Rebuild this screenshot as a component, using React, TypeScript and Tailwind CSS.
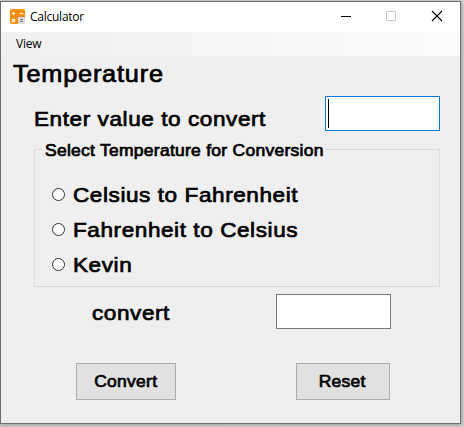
import React from "react";

const bold = "block w-fit whitespace-nowrap text-black [-webkit-text-stroke:0.7px_black]";
const large = `${bold} origin-left scale-x-110 text-[20.5px] leading-[24px] tracking-[0.52px]`;
const medium = `${bold} text-[16.5px] leading-[16px] tracking-[0.25px]`;

function CalculatorIcon() {
  return (
    <svg width="15" height="15" viewBox="0 0 15 15" className="mt-[7px] ml-[9px] shrink-0">
      <rect width="15" height="15" rx="2" fill="#f9920a" />
      <path d="M8 8h7v5a2 2 0 0 1-2 2H8z" fill="#dedede" />
      <path d="M7.5 0v15M0 7.5h15" stroke="#d87908" strokeWidth="0.6" />
      <path d="M2 4.5h3M3.5 3v3M10 4.5h3" stroke="#fff" strokeWidth="1.1" />
      <path d="M2 10l3 3M5 10l-3 3" stroke="#fff" strokeWidth="1.1" />
      <path d="M10 10.5h3M10 12.5h3" stroke="#777" strokeWidth="1" />
    </svg>
  );
}

function TitleBar() {
  return (
    <header className="flex h-[30px] bg-white">
      <CalculatorIcon />
      <span className="ml-[5px] pt-[5px] font-['Open_Sans','Noto_Sans',sans-serif] text-[12px] leading-[19px] tracking-[-0.25px] text-black">
        Calculator
      </span>
      <svg width="103" height="30" viewBox="0 0 103 30" className="mr-[16px] ml-auto" fill="none" shapeRendering="crispEdges">
        <path d="M0 14.5h10" stroke="#000" />
        <path d="M45.5 9.5h9v9h-9z" stroke="#ccc" />
        <path d="M91 9l10 10M101 9l-10 10" stroke="#000" strokeWidth="1.1" shapeRendering="auto" />
      </svg>
    </header>
  );
}

function Option({ label }: { label: string }) {
  return (
    <label className="flex h-[35px] items-center">
      <input type="radio" name="conversion" className="mr-[8px] size-[13px] appearance-none rounded-full border border-[#333] bg-white" />
      <span className={large}>{label}</span>
    </label>
  );
}

export default function App() {
  return (
    <div className="h-[427px] w-[464px] overflow-hidden bg-gradient-to-r from-[#d0d0d0] to-[#d8d6d6] pt-px font-['Liberation_Sans',Arial,sans-serif]">
      <main className="flex h-[423px] w-[461px] flex-col border border-[#6e6e6e] bg-[#efefef] shadow-[1px_1px_4px_#999]">
        <TitleBar />
        <nav className="h-[24px] shrink-0 bg-gradient-to-r from-[#f0f0f0] to-[#fcfcfc] pt-[3px] pl-[15px] font-['Open_Sans','Noto_Sans',sans-serif] text-[12px] leading-[18px] tracking-[-0.25px] text-black">
          View
        </nav>
        <h1 className={`${bold} mt-[5px] ml-[12px] origin-left scale-x-110 text-[23px] leading-[26px] font-normal tracking-[0.72px]`}>
          Temperature
        </h1>
        <div className="mt-[9px] flex h-[35px] pr-[20px] pl-[33px]">
          <span className={`${large} pt-[11px]`}>Enter value to convert</span>
          <div className="ml-auto h-[35px] w-[115px] border border-[#0078d7] bg-white pt-[2px] pl-[2px]">
            <div className="h-[29px] w-px bg-black" />
          </div>
        </div>
        <fieldset className="mt-[11px] ml-[33px] h-[145px] w-[406px] border border-[#dcdcdc] pt-[20px] pl-[17px]">
          <legend className="-ml-[10px] h-[15px] w-[284px] pl-[2.5px]">
            <span className={`${medium} origin-left scale-x-[1.06]`}>Select Temperature for Conversion</span>
          </legend>
          <Option label="Celsius to Fahrenheit" />
          <Option label="Fahrenheit to Celsius" />
          <Option label="Kevin" />
        </fieldset>
        <div className="mt-[7px] flex h-[35px] pl-[91px]">
          <span className={`${large} pt-[7px]`}>convert</span>
          <div className="mr-[69px] ml-auto h-[35px] w-[115px] border border-[#7a7a7a] bg-white" />
        </div>
        <div className="mt-[34px] flex pl-[75px]">
          <button className="flex h-[37px] w-[100px] items-center justify-center border border-[#adadad] bg-[#e1e1e1] pr-px pb-[2px]">
            <span className={`${medium} scale-x-[1.06]`}>Convert</span>
          </button>
          <button className="ml-[120px] flex h-[37px] w-[94px] items-center justify-center border border-[#adadad] bg-[#e1e1e1] pr-px pb-[2px]">
            <span className={`${medium} scale-x-[1.06]`}>Reset</span>
          </button>
        </div>
      </main>
    </div>
  );
}
